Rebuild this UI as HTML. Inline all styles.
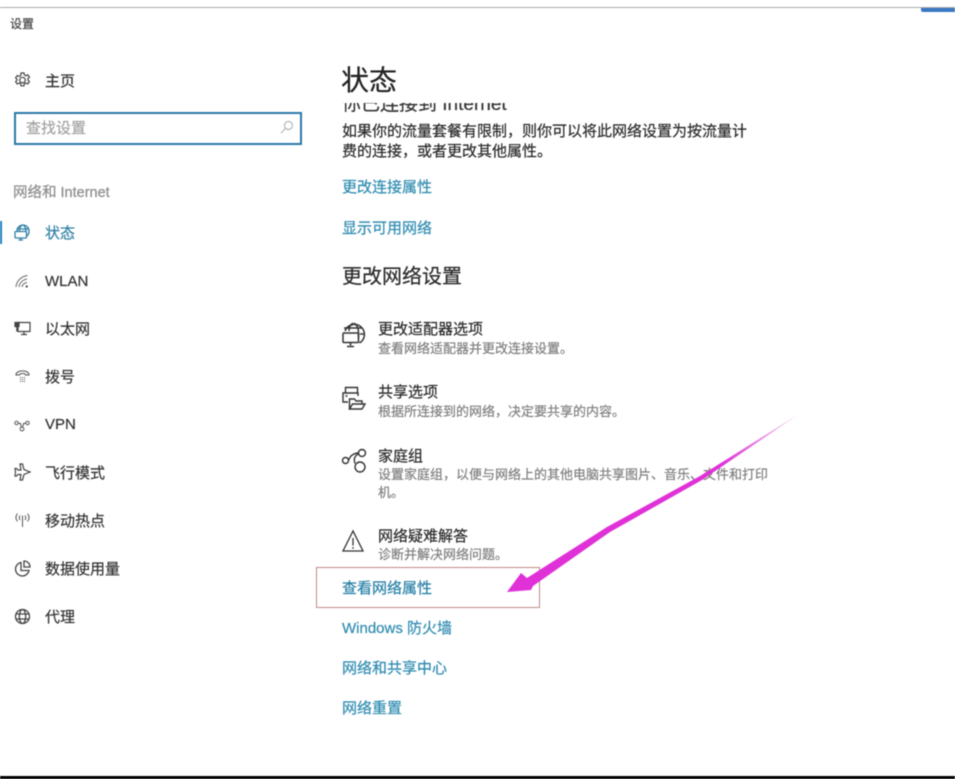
<!DOCTYPE html>
<html lang="zh-CN">
<head>
<meta charset="utf-8">
<title>设置</title>
<style>
html,body{margin:0;padding:0;background:#fff}
body{width:955px;height:779px;position:relative;overflow:hidden;font-family:"Liberation Sans","Noto Sans CJK SC",sans-serif;color:#333}
#w{position:absolute;left:0;top:0;width:955px;height:779px;filter:blur(.5px)}
.t{position:absolute;white-space:nowrap;line-height:20px;font-size:15px;margin-top:1px;-webkit-text-stroke:.2px currentColor}
.l{color:#2f8bb0}
.s{color:#7f7f7f;font-size:13px}
.d{color:#2a2a2a}
svg{position:absolute;overflow:visible;fill:none;stroke:#444;stroke-width:1.2}
</style>
</head>
<body>
<div id="w">
<div style="position:absolute;left:0;top:7px;width:955px;height:1px;background:#aaa"></div>
<div style="position:absolute;left:921px;top:8px;width:34px;height:4px;background:#3b78c4;border-radius:0 0 0 2px"></div>
<div class="t" style="left:10px;top:13px;font-size:12px;color:#444">设置</div>

<svg style="left:14px;top:72px" width="17" height="17" viewBox="0 0 17 17" stroke-width="1.1"><path d="M7 1h3l.4 2 1.6.8 1.8-1 1.6 2.400-1.400 1.300v1.800l1.400 1.300-1.600 2.400-1.800-1-1.600.8-.4 2H7l-.4-2-1.600-.8-1.800 1-1.600-2.400 1.400-1.300V7.200L1.600 5.900 3.200 3.500l1.800 1 1.600-.8z"/><circle cx="8.500" cy="8.100" r="2.800"/></svg>
<div class="t" style="left:45px;top:71px;color:#333">主页</div>

<div style="position:absolute;left:14px;top:112px;width:284px;height:29px;border:2px solid #2b78a8;background:#fff"></div>
<div class="t" style="left:26px;top:118px;color:#a3a3a3">查找设置</div>
<svg style="left:280px;top:120px;stroke:#b5b5b5" width="14" height="14" viewBox="0 0 14 14"><circle cx="8.500" cy="5.500" r="4"/><path d="M5.500 8.500L1 13"/></svg>

<div class="t" style="left:13px;top:182px;color:#8c8c8c;font-size:14.500px">网络和 Internet</div>

<div style="position:absolute;left:0;top:221px;width:2px;height:23px;background:#1a80bb"></div>
<svg style="left:14px;top:224px;stroke:#2f7fa6;stroke-width:1.300" width="17" height="17" viewBox="0 0 17 17"><path d="M3 7.500V7a6 6 0 0 1 12 0 6 6 0 0 1-2 5"/><path d="M2.500 5h12M8 1.200c-2.300 1.500-2.800 4-2.800 6.300M9.500 1.200c1.800 1.500 2.500 3.700 2.500 6.300"/><rect x="1" y="7.500" width="11.500" height="6.500" rx="1"/><path d="M6.700 14v1.800M4.500 16h4.500"/></svg>
<div class="t l" style="left:45px;top:223px;color:#2f7fa6">状态</div>

<svg style="left:15px;top:273px;stroke:#666;stroke-width:1" width="14" height="16" viewBox="0 0 14 16"><path d="M1 14C1.500 8 6 3.500 12.500 2.500M4 14c.5-4 3.500-7 8-8M7 14c.4-2.300 2-4 5-4.500"/><circle cx="11.700" cy="13.500" r="1.100" fill="#444" stroke="none"/></svg>
<div class="t" style="left:45px;top:271px">WLAN</div>

<svg style="left:14px;top:321px" width="17" height="15" viewBox="0 0 17 15"><path d="M4 1.500h12v9H4zM10 10.500v2.500M7 13.500h6"/><path d="M1 1.500h4v4H1z" fill="#444"/><path d="M3 5.500v5" stroke-width="1.500"/></svg>
<div class="t" style="left:45px;top:319px">以太网</div>

<svg style="left:15px;top:369px;stroke:#555;stroke-width:1.100" width="15" height="14" viewBox="0 0 15 14"><path d="M1 6C1 .5 14 .5 14 6h-3.500c0-2-6-2-6 0z"/><path d="M5 8.500h1M7 8.500h1M9 8.500h1M5 10.500h1M7 10.500h1M9 10.500h1M5 12.500h1M7 12.500h1M9 12.500h1" stroke-width=".9"/></svg>
<div class="t" style="left:45px;top:367px">拨号</div>

<svg style="left:14px;top:420px;stroke:#555;stroke-width:1" width="16" height="12" viewBox="0 0 16 12"><circle cx="2.500" cy="3" r="1.700"/><circle cx="13.500" cy="3" r="1.700"/><circle cx="8" cy="9" r="1.900"/><path d="M4.200 3c2 0 3 1 3 4M11.800 3c-2 0-3 1-3 4M6 3.500h1M9 3.500h1"/></svg>
<div class="t" style="left:45px;top:414px">VPN</div>

<svg style="left:14px;top:463px;stroke:#444;stroke-width:1.200" width="17" height="18" viewBox="0 0 17 18"><path d="M6 1h2.500l1.500 5.500 6 2.500-6 2.500L8.500 17H6l1-5.500H4L2.500 13H1l.5-4L1 5.500h1.500L4 7h3z"/></svg>
<div class="t" style="left:45px;top:463px">飞行模式</div>

<svg style="left:14px;top:512px;stroke:#555;stroke-width:1" width="17" height="16" viewBox="0 0 17 16"><path d="M8.500 3.500V15M3.500 1.500c-2 2.500-2 5.500 0 8M6 3.500c-1 1.500-1 3 0 4.500M13.500 1.500c2 2.500 2 5.500 0 8M11 3.500c1 1.500 1 3 0 4.500"/></svg>
<div class="t" style="left:45px;top:511px">移动热点</div>

<svg style="left:14px;top:560px;stroke-width:1.300" width="17" height="17" viewBox="0 0 17 17"><path d="M7 2.500a6.800 6.800 0 1 0 8 8H7z"/><path d="M10 1a6 6 0 0 1 6 6h-6z"/></svg>
<div class="t" style="left:45px;top:559px">数据使用量</div>

<svg style="left:14px;top:608px;stroke-width:1.300" width="17" height="17" viewBox="0 0 17 17"><circle cx="8.500" cy="8.500" r="7"/><ellipse cx="8.500" cy="8.500" rx="3.200" ry="7"/><path d="M1.500 6h14M1.500 11h14"/></svg>
<div class="t" style="left:45px;top:607px">代理</div>

<div class="t d" style="left:341px;top:62px;font-size:28px;line-height:36px;color:#222">状态</div>
<div style="position:absolute;left:342px;top:103px;width:300px;height:10px;overflow:hidden">
<div class="t" style="left:0;top:-9px;font-size:19px;color:#333">你已连接到 Internet</div></div>
<div class="t d" style="left:342px;top:121px">如果你的流量套餐有限制，则你可以将此网络设置为按流量计</div>
<div class="t d" style="left:342px;top:141px">费的连接，或者更改其他属性。</div>
<div class="t l" style="left:342px;top:177px">更改连接属性</div>
<div class="t l" style="left:342px;top:218px">显示可用网络</div>
<div class="t d" style="left:342px;top:264px;font-size:20px;line-height:24px">更改网络设置</div>

<svg style="left:341px;top:322px;stroke:#333;stroke-width:1.500" width="25" height="27" viewBox="0 0 25 27"><path d="M4 9a10 10 0 1 1 14.500 12"/><path d="M3 6h18M19 12h4M12 1c-3 2-3.800 4-4 8M13 1c3 2 4.500 5 4.500 10v5"/><rect x="2" y="11" width="15.500" height="9.500" rx="1"/><path d="M9.500 20.500v3M6 24.500h7"/></svg>
<div class="t d" style="left:378px;top:319px">更改适配器选项</div>
<div class="t s" style="left:378px;top:338px">查看网络适配器并更改连接设置。</div>

<svg style="left:341px;top:385px;stroke:#333;stroke-width:1.400" width="26" height="28" viewBox="0 0 26 28"><path d="M4.500 8V2.500h12V8"/><path d="M7 17H2V8h15v3M4.500 11h2"/><path d="M8.500 24V14h5l1.500 2h6v3"/><path d="M8.500 24l3-5h12.500l-3 5z"/></svg>
<div class="t d" style="left:378px;top:382px">共享选项</div>
<div class="t s" style="left:378px;top:401px">根据所连接到的网络，决定要共享的内容。</div>

<svg style="left:341px;top:448px;stroke:#333;stroke-width:1.400" width="26" height="26" viewBox="0 0 26 26"><circle cx="4.500" cy="12.500" r="3"/><circle cx="21" cy="5" r="3.500"/><circle cx="19" cy="19" r="5"/><path d="M7.500 12c2-4 4-6.500 10-7M17.500 5.500c-4 3-5 5-3.500 10"/></svg>
<div class="t d" style="left:378px;top:446px">家庭组</div>
<div class="t s" style="left:378px;top:464px">设置家庭组，以便与网络上的其他电脑共享图片、音乐、文件和打印</div>
<div class="t s" style="left:378px;top:482px">机。</div>

<svg style="left:342px;top:529px;stroke:#333;stroke-width:1.300" width="22" height="23" viewBox="0 0 22 23"><path d="M11 2L1 22h20z"/><path d="M11 9v7.500M11 18v1.700"/></svg>
<div class="t d" style="left:378px;top:526px">网络疑难解答</div>
<div class="t s" style="left:378px;top:544px">诊断并解决网络问题。</div>

<div style="position:absolute;left:316px;top:567px;width:222px;height:39px;border:1px solid #bd8a84"></div>
<div class="t l" style="left:342px;top:578px;color:#267fa6">查看网络属性</div>
<div class="t l" style="left:342px;top:618px">Windows 防火墙</div>
<div class="t l" style="left:342px;top:658px">网络和共享中心</div>
<div class="t l" style="left:342px;top:698px">网络重置</div>

<svg style="left:0;top:0;stroke:none" width="955" height="779" viewBox="0 0 955 779"><defs><linearGradient id="g" gradientUnits="userSpaceOnUse" x1="800" y1="414" x2="720" y2="463"><stop offset="0" stop-color="#efd0ec"/><stop offset="1" stop-color="#e030d8"/></linearGradient></defs><path d="M799 414L700 476L607 527L527 578L521 573L507 592L531 590L533 586L610 532L702 480z" fill="url(#g)"/></svg>

<div style="position:absolute;left:0;top:776px;width:955px;height:3px;background:#000"></div>
</div>
</body>
</html>
